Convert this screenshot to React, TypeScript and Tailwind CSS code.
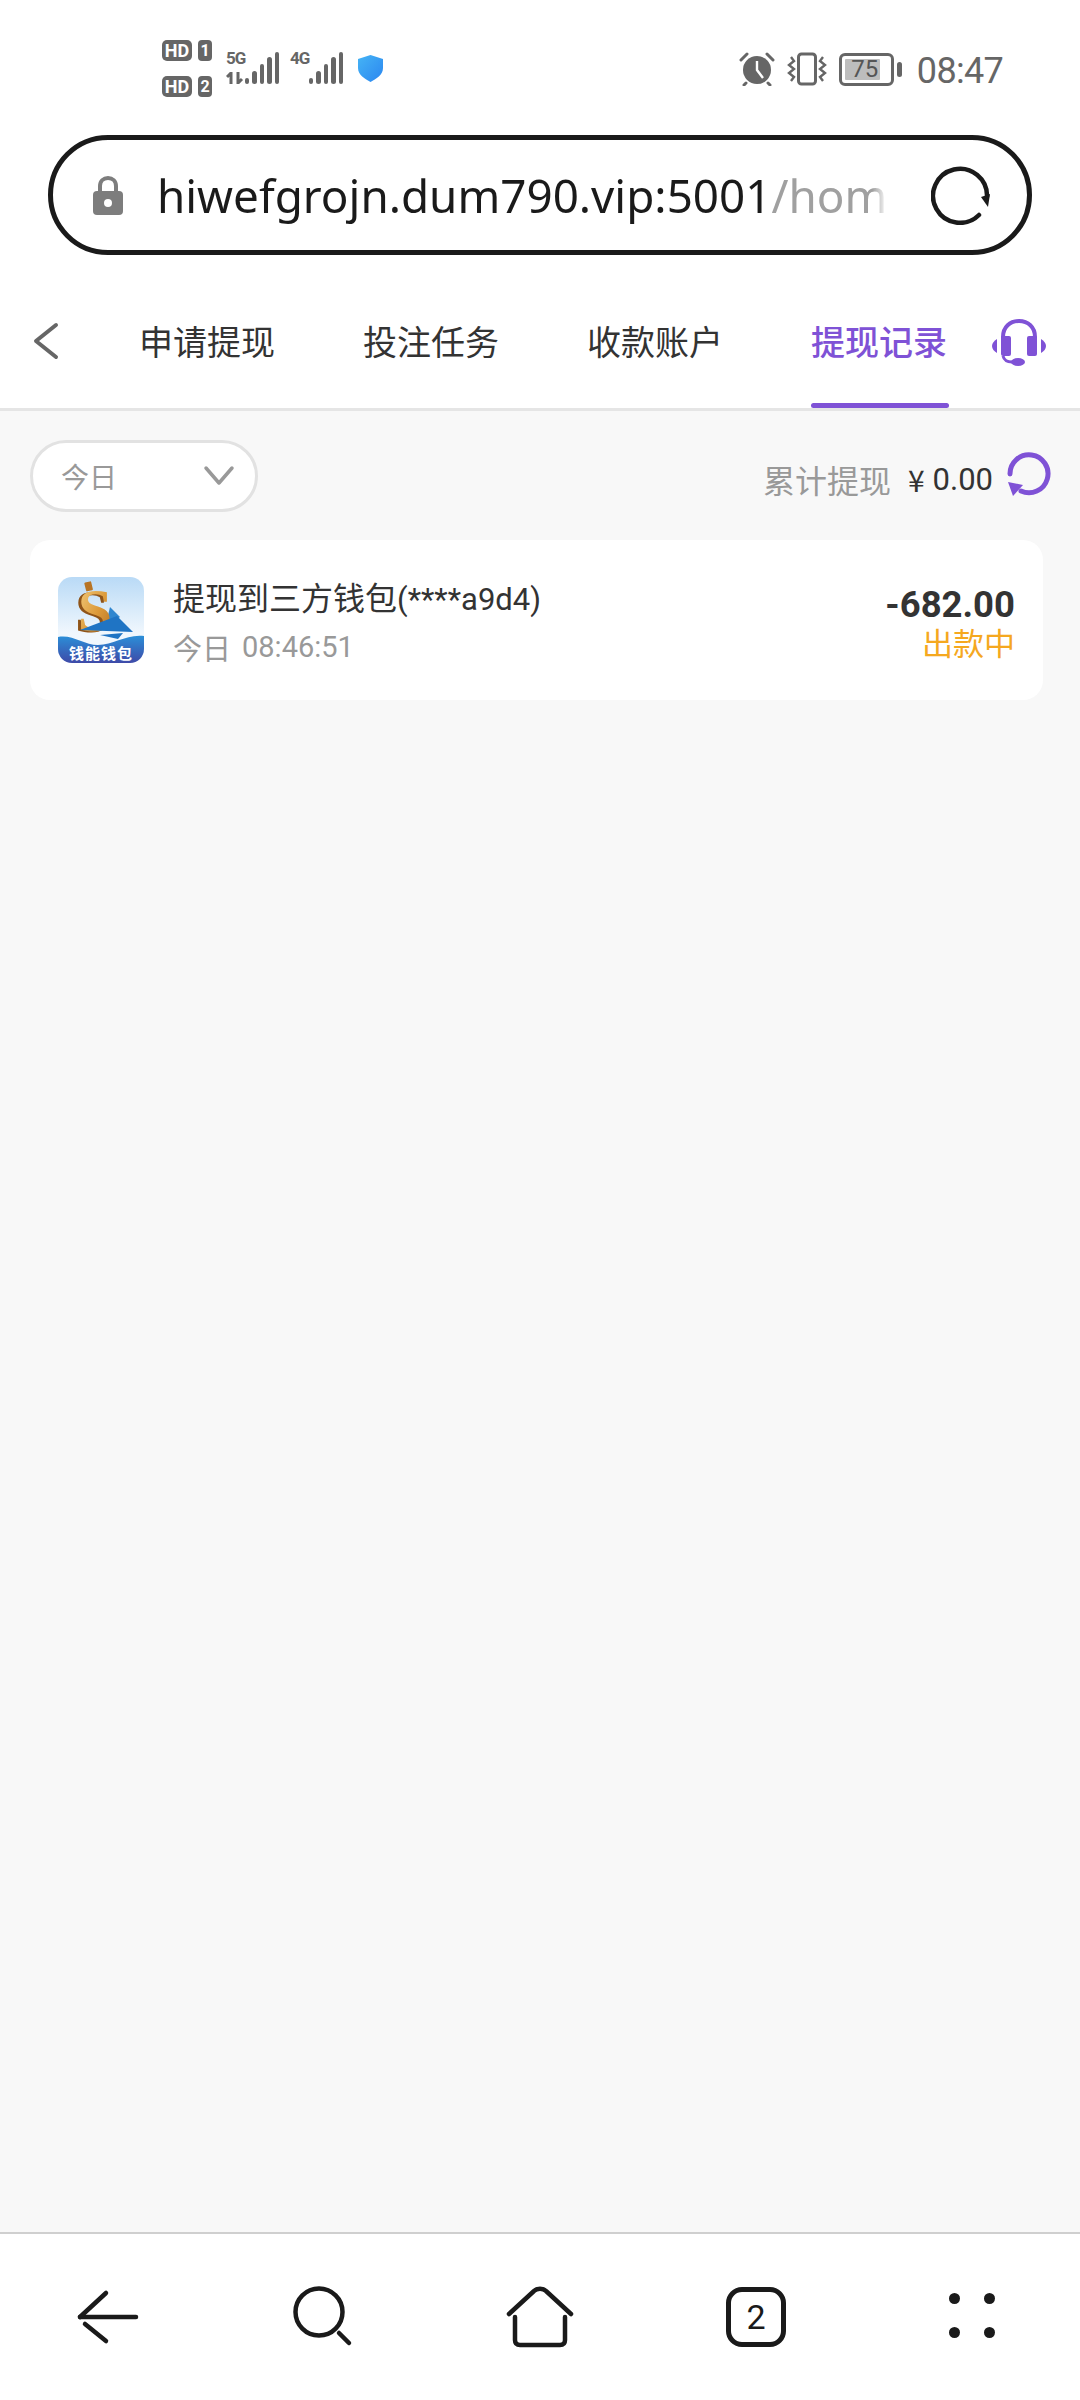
import { type ReactNode } from "react"

const cjk = "font-['Noto_Sans_CJK_SC','Noto_Sans',sans-serif]"
const roboto = "font-['Roboto',sans-serif]"
const tabs = ["申请提现", "投注任务", "收款账户"]
const barHeights = ["h-[6px]", "h-[13px]", "h-[20px]", "h-[27px]", "h-[32px]"]

const SignalBars = () => (
	<div className="absolute bottom-0 right-0 flex items-end gap-[3px]">
		{barHeights.map((h) => (
			<span key={h} className={`w-[4.5px] rounded-full bg-[#666] ${h}`} />
		))}
	</div>
)

const SimBadge = ({ n }: { n: string }) => (
	<div className="flex h-[21px] items-center gap-[6px]">
		<span className={`flex h-[21px] w-[30px] items-center justify-center rounded-[5px] bg-[#666] text-[18px] font-bold leading-none text-white ${roboto}`}>HD</span>
		<span className={`flex h-[21px] w-[14px] items-center justify-center rounded-[4px] bg-[#666] text-[16px] font-bold leading-none text-white ${roboto}`}>{n}</span>
	</div>
)

const NetworkBlock = ({ label, className, children }: { label: string; className: string; children?: ReactNode }) => (
	<div className={`relative mt-[14px] h-[32px] w-[53px] ${className}`}>
		<span className={`absolute left-0 top-0 text-[17px] font-bold leading-[13px] tracking-[-1px] text-[#666] ${roboto}`}>{label}</span>
		{children}
		<SignalBars />
	</div>
)

const StatusBar = () => (
	<div className="flex h-[135px] shrink-0 items-start justify-between pl-[162px] pr-[77px] pt-[38px]">
		<div className="flex items-start">
			<div className="flex flex-col gap-[15px] pt-[2px]">
				<SimBadge n="1" />
				<SimBadge n="2" />
			</div>
			<NetworkBlock label="5G" className="ml-[14px]">
				<svg className="absolute bottom-0 left-0" width="18" height="12" viewBox="0 0 18 12" fill="none" stroke="#666" strokeWidth="3">
					<path d="M5 12 V1 L1 5" />
					<path d="M12 0 V11 L16 7" />
				</svg>
			</NetworkBlock>
			<NetworkBlock label="4G" className="ml-[11px]" />
			<svg className="ml-[15px] mt-[17px]" width="25" height="27" viewBox="0 0 25 27">
				<defs>
					<linearGradient id="shield" x1="0" y1="0" x2="1" y2="1">
						<stop offset="0" stopColor="#45b4f5" />
						<stop offset="1" stopColor="#2b86f0" />
					</linearGradient>
				</defs>
				<path d="M12.5 0 L25 4 V13 C25 20 18 24 12.5 27 C7 24 0 20 0 13 V4 Z" fill="url(#shield)" />
			</svg>
		</div>
		<div className="mt-[14px] flex h-[34px] items-center">
			<svg width="36" height="34" viewBox="0 0 36 34" fill="#666">
				<circle cx="18" cy="18" r="14" />
				<path d="M18 9 V18 L24 26" stroke="#fff" strokeWidth="2.4" fill="none" />
				<path d="M2 8 L8 2 M34 8 L28 2 M7 31 L5 33 M29 31 L31 33" stroke="#666" strokeWidth="3" strokeLinecap="round" />
			</svg>
			<svg className="ml-[12px]" width="40" height="34" viewBox="0 0 40 34" fill="none" stroke="#666" strokeWidth="3">
				<rect x="11.5" y="2" width="17" height="30" rx="3" />
				<path d="M4 5 L7 9 L2 13 L7 17 L2 21 L7 25 L4 29 M36 5 L33 9 L38 13 L33 17 L38 21 L33 25 L36 29" strokeWidth="2.4" />
			</svg>
			<div className="ml-[12px] flex items-center">
				<div className="relative flex h-[33px] w-[55px] items-center rounded-[6px] border-[3px] border-[#666] p-[3px]">
					<div className="h-full w-[35px] rounded-[1px] bg-[#bdbdbd]" />
					<span className={`absolute inset-0 flex items-center justify-center pr-[3px] text-[24px] leading-none text-[#555] ${roboto}`}>75</span>
				</div>
				<span className="ml-[3px] h-[15px] w-[5px] rounded-sm bg-[#666]" />
			</div>
			<span className={`ml-[15px] mt-[3px] text-[36px] leading-none tracking-[-0.7px] text-[#666] ${roboto}`}>08:47</span>
		</div>
	</div>
)

const AddressBar = () => (
	<div className="mx-[48px] flex h-[120px] shrink-0 items-center rounded-full border-[5px] border-[#1a1a1a] pl-[40px] pr-[36px]">
		<svg width="30" height="39" viewBox="0 0 30 39" className="shrink-0">
			<path d="M7 17 V10 C7 5 10.5 2 15 2 C19.5 2 23 5 23 10 V17" fill="none" stroke="#7d7d7d" strokeWidth="4" />
			<rect x="0" y="15" width="30" height="24" rx="4" fill="#7d7d7d" />
			<circle cx="15" cy="27" r="4" fill="#fff" />
		</svg>
		<div className="ml-[34px] w-[730px] overflow-hidden whitespace-nowrap font-['Noto_Sans',sans-serif] text-[45.8px] leading-[64px] text-[#1a1a1a] [mask-image:linear-gradient(to_right,black_98%,transparent)]">
			hiwefgrojn.dum790.vip:5001<span className="text-[#a0a0a0]">/home</span>
		</div>
		<svg className="ml-auto shrink-0" width="60" height="60" viewBox="0 0 60 60" fill="none">
			<path d="M48 50 A27 27 0 1 1 56 32" stroke="#1a1a1a" strokeWidth="4.5" strokeLinecap="round" />
			<path d="M50 32 L59 29 L57 42 Z" fill="#1a1a1a" />
		</svg>
	</div>
)

const TabBar = () => (
	<div className={`mt-[15px] flex h-[141px] shrink-0 items-stretch border-b-[3px] border-[#e5e5e5] ${cjk}`}>
		<div className="flex w-[139px] items-center pl-[33px] pt-[4px]">
			<svg width="26" height="38" viewBox="0 0 26 38" fill="none" stroke="#666" strokeWidth="4" strokeLinecap="round" strokeLinejoin="round">
				<path d="M23 3 L3 19 L23 35" />
			</svg>
		</div>
		<div className="flex gap-[88px]">
			{tabs.map((t) => (
				<div key={t} className="flex items-center pt-[4px] text-[34px] leading-none text-[#333]">{t}</div>
			))}
			<div className="relative flex items-center pt-[4px] text-[34px] font-medium leading-none text-[#7f52d6]">
				提现记录
				<span className="absolute bottom-0 left-0 h-[5px] w-[138px] rounded-full bg-[#7f52d6]" />
			</div>
		</div>
		<div className="ml-[45px] flex items-center pt-[8px]">
			<svg width="54" height="48" viewBox="0 0 54 48" fill="#7f52d6">
				<path d="M11 24 V18 C11 8 18 2 27 2 C36 2 43 8 43 18 V24" fill="none" stroke="#7f52d6" strokeWidth="4" />
				<rect x="9" y="17" width="10" height="20" rx="2" />
				<rect x="35" y="17" width="10" height="20" rx="2" />
				<path d="M5 20 V34 C2 32 0 30 0 27 C0 24 2 22 5 20 Z" />
				<path d="M49 20 V34 C52 32 54 30 54 27 C54 24 52 22 49 20 Z" />
				<path d="M11 37 C12 41 15 43 20 43" fill="none" stroke="#7f52d6" strokeWidth="3" />
				<ellipse cx="26" cy="43" rx="7" ry="4" />
			</svg>
		</div>
	</div>
)

const AppLogo = () => (
	<svg width="86" height="86" viewBox="0 0 86 86" className="shrink-0">
		<defs>
			<linearGradient id="sky" x1="0" y1="0" x2="0" y2="1">
				<stop offset="0" stopColor="#b9daf6" />
				<stop offset="0.65" stopColor="#f0f7fd" />
			</linearGradient>
			<linearGradient id="sea" x1="0" y1="0" x2="0" y2="1">
				<stop offset="0" stopColor="#2b8fd8" />
				<stop offset="1" stopColor="#3e4aa8" />
			</linearGradient>
			<linearGradient id="gold" x1="0" y1="0" x2="1" y2="1">
				<stop offset="0" stopColor="#f6d488" />
				<stop offset="0.55" stopColor="#dc9a3a" />
				<stop offset="1" stopColor="#b06c20" />
			</linearGradient>
			<clipPath id="logoClip">
				<rect width="86" height="86" rx="14" />
			</clipPath>
		</defs>
		<g clipPath="url(#logoClip)">
			<rect width="86" height="86" fill="url(#sky)" />
			<path d="M47 51 L52 30 L62 40 Z" fill="#2f86cf" />
			<rect x="27" y="5" width="7" height="9" rx="1" fill="#b87424" transform="rotate(-14 30 9)" />
			<text x="34" y="55" textAnchor="middle" fontFamily="Liberation Serif" fontWeight="700" fontSize="62" fill="#8f5418">S</text>
			<text x="37" y="54" textAnchor="middle" fontFamily="Liberation Serif" fontWeight="700" fontSize="62" fill="url(#gold)">S</text>
			<path d="M22 53 L59 39 L75 55 Z" fill="#1f74c4" />
			<path d="M42 58 L65 56 L60 62 Z" fill="#1f74c4" />
			<path d="M0 60 C14 57 26 68 40 68 C56 68 68 57 86 59 V86 H0 Z" fill="url(#sea)" />
			<text x="43" y="82" textAnchor="middle" fontFamily="Noto Sans CJK SC" fontWeight="700" fontSize="15" letterSpacing="1" fill="#fff">钱能钱包</text>
		</g>
	</svg>
)

const RecordCard = () => (
	<div className={`ml-[30px] mr-[37px] mt-[28px] flex h-[160px] items-center rounded-[20px] bg-white px-[28px] ${cjk}`}>
		<AppLogo />
		<div className="ml-[29px] flex flex-col gap-[15px]">
			<div className="text-[32px] leading-[34px] text-[#333]">
				提现到三方钱包<span className={`text-[31px] ${roboto}`}>(****a9d4)</span>
			</div>
			<div className="flex text-[29px] leading-[30px] text-[#999]">
				今日<span className={`ml-[11px] ${roboto}`}>08:46:51</span>
			</div>
		</div>
		<div className="ml-auto flex flex-col items-end">
			<div className={`text-[36.5px] font-bold leading-[43px] text-[#333] ${roboto}`}>-682.00</div>
			<div className="text-[31px] leading-[31px] text-[#f5a81f]">出款中</div>
		</div>
	</div>
)

const FilterRow = () => (
	<div className={`mt-[29px] flex items-center justify-between pl-[30px] pr-[28px] ${cjk}`}>
		<div className="flex h-[72px] w-[228px] items-center justify-between rounded-full border-[3px] border-[#e2e2e2] bg-white pl-[28px] pr-[20px]">
			<span className="text-[28px] leading-none text-[#999]">今日</span>
			<svg width="32" height="22" viewBox="0 0 32 22" fill="none" stroke="#999" strokeWidth="3.5" strokeLinecap="round" strokeLinejoin="round">
				<path d="M3 3 L16 18 L29 3" />
			</svg>
		</div>
		<div className="flex items-center">
			<span className="mt-[6px] text-[32px] leading-none text-[#999]">累计提现</span>
			<span className="ml-[17px] mt-[6px] text-[30px] leading-none text-[#333]">¥</span>
			<span className={`ml-[8px] mt-[6px] text-[31px] leading-none text-[#333] ${roboto}`}>0.00</span>
			<svg className="mb-[4px] ml-[13px]" width="46" height="46" viewBox="0 0 46 46" fill="none">
				<path d="M4 23 A19 19 0 1 1 15 40" stroke="#7f52d6" strokeWidth="5" strokeLinecap="round" />
				<path d="M2 31 L17 34 L7 45 Z" fill="#7f52d6" />
			</svg>
		</div>
	</div>
)

const BottomNav = () => (
	<div className="flex h-[168px] shrink-0 items-start border-t-[2px] border-[#cfcfcf] bg-white pl-[76px] pt-[50px]">
		<svg className="mt-[4px]" width="64" height="58" viewBox="0 0 64 58" fill="none" stroke="#1a1a1a" strokeWidth="4.5" strokeLinecap="round">
			<path d="M4 29 H60" />
			<path d="M4 29 L30 5" />
			<path d="M9 36 L30 53" />
		</svg>
		<svg className="ml-[152px] mt-[1px]" width="62" height="62" viewBox="0 0 62 62" fill="none" stroke="#1a1a1a" strokeWidth="4.5" strokeLinecap="round">
			<circle cx="27" cy="27" r="23.5" />
			<path d="M47 48 L57 58" />
		</svg>
		<svg className="ml-[152px]" width="68" height="66" viewBox="0 0 68 66" fill="none" stroke="#1a1a1a" strokeWidth="4.5" strokeLinecap="round" strokeLinejoin="round">
			<path d="M3 30 L28 7 C31 4 37 4 40 7 L65 30" />
			<path d="M9 33 V56 Q9 61 14 61 H54 Q59 61 59 56 V33" />
		</svg>
		<div className={`ml-[152px] mt-[3px] flex size-[60px] items-center justify-center rounded-[16px] border-[5px] border-[#1a1a1a] text-[34px] leading-none text-[#1a1a1a] ${roboto}`}>2</div>
		<div className="ml-[163px] mt-[9px] grid grid-cols-2 gap-x-[24px] gap-y-[23px]">
			<span className="size-[11px] rounded-full bg-[#1a1a1a]" />
			<span className="size-[11px] rounded-full bg-[#1a1a1a]" />
			<span className="size-[11px] rounded-full bg-[#1a1a1a]" />
			<span className="size-[11px] rounded-full bg-[#1a1a1a]" />
		</div>
	</div>
)

const App = () => (
	<div className="flex h-[2400px] w-[1080px] flex-col overflow-hidden bg-white">
		<StatusBar />
		<AddressBar />
		<TabBar />
		<div className="flex-1 bg-[#f8f8f8]">
			<FilterRow />
			<RecordCard />
		</div>
		<BottomNav />
	</div>
)

export default App
